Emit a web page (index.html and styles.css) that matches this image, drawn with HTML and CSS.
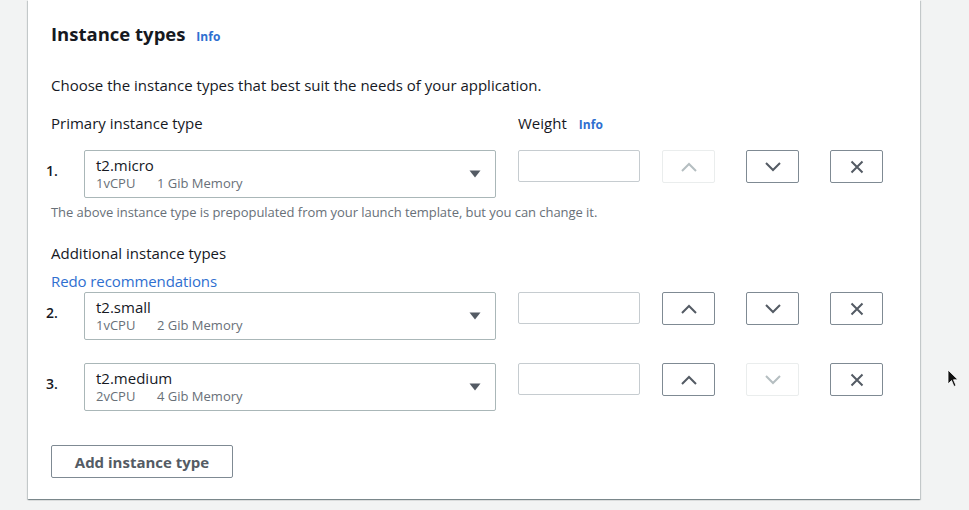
FILE: index.html
```html
<!DOCTYPE html>
<html lang="en">
<head>
<meta charset="utf-8">
<title>Instance types</title>
<link rel="stylesheet" href="styles.css">
</head>
<body>
<div class="card">
  <h2 class="title">Instance types <a class="info" href="#">Info</a></h2>
  <p class="desc">Choose the instance types that best suit the needs of your application.</p>

  <div class="labels">
    <span class="label">Primary instance type</span>
    <span class="label">Weight <a class="info" href="#">Info</a></span>
  </div>

  <div class="row row-first">
    <span class="num">1.</span>
    <div class="select">
      <div class="sel-text">
        <span class="sel-name">t2.micro</span>
        <span class="sel-meta"><span class="cpu">1vCPU</span>1 Gib Memory</span>
      </div>
      <svg class="caret" width="12" height="8" viewBox="0 0 12 8"><path d="M0.5 0.5 H11.5 L6 7.5 Z" fill="#545b64"/></svg>
    </div>
    <div class="weight"></div>
    <button class="btn disabled"><svg width="18" height="12" viewBox="0 0 18 12"><path d="M2 10 L9 3 L16 10" fill="none" stroke="currentColor" stroke-width="2"/></svg></button>
    <button class="btn"><svg width="18" height="12" viewBox="0 0 18 12"><path d="M2 2 L9 9 L16 2" fill="none" stroke="currentColor" stroke-width="2"/></svg></button>
    <button class="btn"><svg width="14" height="14" viewBox="0 0 14 14"><path d="M1.5 1.5 L12.5 12.5 M12.5 1.5 L1.5 12.5" fill="none" stroke="currentColor" stroke-width="2"/></svg></button>
  </div>
  <p class="helper">The above instance type is prepopulated from your launch template, but you can change it.</p>

  <div class="label add-label">Additional instance types</div>
  <a class="redo" href="#">Redo recommendations</a>

  <div class="row row-second">
    <span class="num">2.</span>
    <div class="select">
      <div class="sel-text">
        <span class="sel-name">t2.small</span>
        <span class="sel-meta"><span class="cpu">1vCPU</span>2 Gib Memory</span>
      </div>
      <svg class="caret" width="12" height="8" viewBox="0 0 12 8"><path d="M0.5 0.5 H11.5 L6 7.5 Z" fill="#545b64"/></svg>
    </div>
    <div class="weight"></div>
    <button class="btn"><svg width="18" height="12" viewBox="0 0 18 12"><path d="M2 10 L9 3 L16 10" fill="none" stroke="currentColor" stroke-width="2"/></svg></button>
    <button class="btn"><svg width="18" height="12" viewBox="0 0 18 12"><path d="M2 2 L9 9 L16 2" fill="none" stroke="currentColor" stroke-width="2"/></svg></button>
    <button class="btn"><svg width="14" height="14" viewBox="0 0 14 14"><path d="M1.5 1.5 L12.5 12.5 M12.5 1.5 L1.5 12.5" fill="none" stroke="currentColor" stroke-width="2"/></svg></button>
  </div>

  <div class="row row-third">
    <span class="num">3.</span>
    <div class="select">
      <div class="sel-text">
        <span class="sel-name">t2.medium</span>
        <span class="sel-meta"><span class="cpu">2vCPU</span>4 Gib Memory</span>
      </div>
      <svg class="caret" width="12" height="8" viewBox="0 0 12 8"><path d="M0.5 0.5 H11.5 L6 7.5 Z" fill="#545b64"/></svg>
    </div>
    <div class="weight"></div>
    <button class="btn"><svg width="18" height="12" viewBox="0 0 18 12"><path d="M2 10 L9 3 L16 10" fill="none" stroke="currentColor" stroke-width="2"/></svg></button>
    <button class="btn disabled"><svg width="18" height="12" viewBox="0 0 18 12"><path d="M2 2 L9 9 L16 2" fill="none" stroke="currentColor" stroke-width="2"/></svg></button>
    <button class="btn"><svg width="14" height="14" viewBox="0 0 14 14"><path d="M1.5 1.5 L12.5 12.5 M12.5 1.5 L1.5 12.5" fill="none" stroke="currentColor" stroke-width="2"/></svg></button>
  </div>

  <button class="add-btn">Add instance type</button>
</div>

<svg class="cursor" width="12" height="19" viewBox="0 0 12 19"><path d="M1 1 L1 15 L4.5 11.5 L7 17.5 L9 16.5 L6.5 10.8 L11 10.8 Z" fill="#111" stroke="#fff" stroke-width="0.8"/></svg>
</body>
</html>
```

FILE: styles.css
```css
html, body {
  margin: 0;
  padding: 0;
}
body {
  background: #f2f3f3;
  font-family: "Open Sans", "Noto Sans", sans-serif;
  color: #16191f;
  width: 969px;
  height: 510px;
  overflow: hidden;
  position: relative;
}
.card {
  margin-left: 28px;
  width: 892px;
  height: 499px;
  box-sizing: border-box;
  background: #fff;
  padding: 23px 0 0 23px;
  box-shadow: 0 1px 1px 0 rgba(0, 28, 36, 0.3), 1px 1px 1px 0 rgba(0, 28, 36, 0.15), -1px 1px 1px 0 rgba(0, 28, 36, 0.15);
}
.title {
  margin: 0;
  font-size: 18.5px;
  line-height: 22px;
  height: 22px;
  font-weight: 700;
  letter-spacing: 0;
}
.info {
  font-size: 12px;
  line-height: 1;
  font-weight: 700;
  color: #2f6fd0;
  text-decoration: none;
  margin-left: 6px;
  letter-spacing: 0.1px;
}
.title .info {
  margin-left: 6px;
}
.desc {
  margin: 30px 0 0;
  font-size: 15px;
  line-height: 20px;
  height: 20px;
  letter-spacing: 0;
}
.labels {
  margin-top: 18px;
  height: 20px;
  display: grid;
  grid-template-columns: 467px auto;
}
.label {
  font-size: 15px;
  line-height: 20px;
  height: 20px;
  letter-spacing: 0;
}
.labels .info {
  margin-left: 8px;
}
.row {
  display: flex;
  align-items: flex-start;
  margin-left: -5px;
}
.row-first { margin-top: 17px; }
.row-second { margin-top: 1px; }
.row-third { margin-top: 23px; }
.num {
  width: 38px;
  padding-top: 11px;
  font-size: 14px;
  line-height: 20px;
  font-weight: 600;
}
.select {
  width: 412px;
  height: 48px;
  box-sizing: border-box;
  border: 1px solid #aab7b8;
  border-radius: 2px;
  display: flex;
  align-items: center;
  padding: 0 14px 0 11px;
}
.sel-text {
  flex: 1;
  display: flex;
  flex-direction: column;
  margin-top: -1px;
}
.sel-name {
  font-size: 15px;
  line-height: 20px;
  letter-spacing: 0;
}
.sel-meta {
  font-size: 13px;
  line-height: 17px;
  color: #687078;
  letter-spacing: 0;
}
.cpu {
  display: inline-block;
  width: 61px;
}
.caret {
  display: block;
  margin-top: 0;
}
.weight {
  width: 122px;
  height: 32px;
  box-sizing: border-box;
  border: 1px solid #c6ccd0;
  border-radius: 2px;
  margin-left: 22px;
}
.btn {
  width: 53px;
  height: 33px;
  box-sizing: border-box;
  border: 1px solid #7f8a93;
  border-radius: 2px;
  background: #fff;
  color: #545b64;
  display: flex;
  align-items: center;
  justify-content: center;
  padding: 0;
  margin-left: 31px;
}
.weight + .btn {
  margin-left: 22px;
}
.btn.disabled {
  border-color: #eaeded;
  color: #b5bec1;
}
.helper {
  margin: 6px 0 0;
  font-size: 13px;
  line-height: 16px;
  height: 16px;
  color: #687078;
  letter-spacing: -0.05px;
}
.add-label {
  margin-top: 23px;
}
.redo {
  display: block;
  margin-top: 8px;
  font-size: 15px;
  line-height: 20px;
  height: 20px;
  color: #2f6fd0;
  text-decoration: none;
  letter-spacing: -0.1px;
}
.add-btn {
  display: block;
  margin-top: 34px;
  width: 182px;
  height: 33px;
  box-sizing: border-box;
  border: 1px solid #7f8a93;
  border-radius: 2px;
  background: #fff;
  font-family: inherit;
  font-size: 15px;
  font-weight: 700;
  color: #545b64;
  letter-spacing: 0;
}
.cursor {
  position: absolute;
  left: 947px;
  top: 369px;
}
```
